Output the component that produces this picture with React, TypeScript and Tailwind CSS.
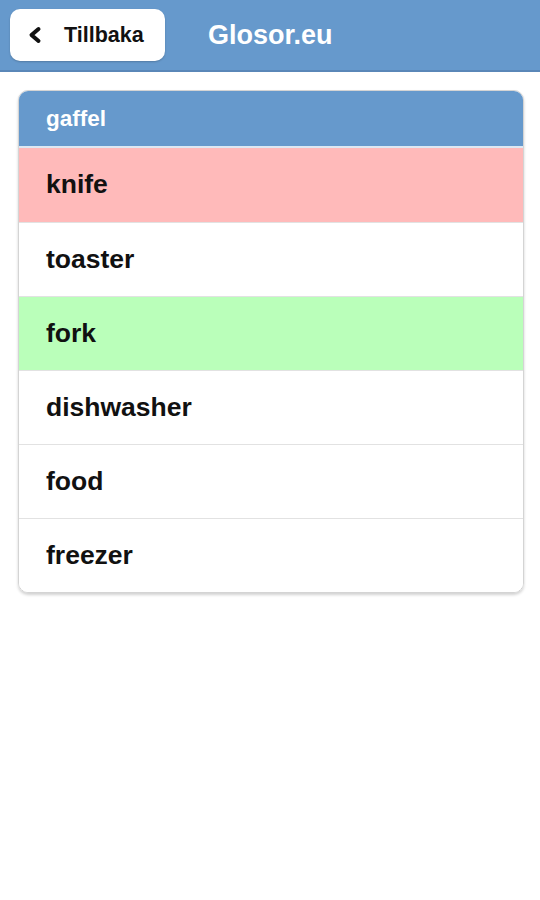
import React from "react";

const rows: { w: string; bg: string }[] = [
  { w: "knife", bg: "bg-[#ffbaba]" },
  { w: "toaster", bg: "bg-white" },
  { w: "fork", bg: "bg-[#baffba]" },
  { w: "dishwasher", bg: "bg-white" },
  { w: "food", bg: "bg-white" },
  { w: "freezer", bg: "bg-white" },
];

export default function App() {
  return (
    <div className="w-[540px] h-[900px] bg-white" style={{ fontFamily: '"Liberation Sans", Arial, sans-serif' }}>
      <div className="h-[72px] bg-[#6699cc] border-b-2 border-[#5a87b8] flex items-center px-[10px] gap-[43px]">
        <div className="w-[155px] h-[52px] bg-white rounded-[10px] shadow-[0_1px_2px_rgba(0,0,0,0.2)] flex items-center pl-[17px] gap-[22px]">
          <svg width="15" height="18" viewBox="0 0 15 18">
            <path d="M11.5 3 L4.5 9 L11.5 15" fill="none" stroke="#111" strokeWidth="4" strokeLinecap="round" strokeLinejoin="round" />
          </svg>
          <span className="text-[21.5px] font-bold text-[#111]">Tillbaka</span>
        </div>
        <span className="text-[27px] font-bold text-white">Glosor.eu</span>
      </div>
      <div className="px-[18px] pt-[18px]">
        <div className="w-[506px] rounded-[10px] border border-[#d4d4d4] shadow-[0_2px_3px_rgba(0,0,0,0.18)] overflow-hidden">
          <div className="h-[57px] bg-[#6699cc] flex items-center pl-[27px] border-b-[2px] border-[#dde8f3]">
            <span className="text-[22.5px] font-bold text-white">gaffel</span>
          </div>
          {rows.map((r, i) => (
            <div
              key={r.w}
              className={`h-[74px] flex items-center pl-[27px] ${r.bg} ${i > 0 ? "border-t border-[#e2e2e2]" : ""}`}
            >
              <span className="text-[26.5px] font-bold text-[#111]">{r.w}</span>
            </div>
          ))}
        </div>
      </div>
    </div>
  );
}
